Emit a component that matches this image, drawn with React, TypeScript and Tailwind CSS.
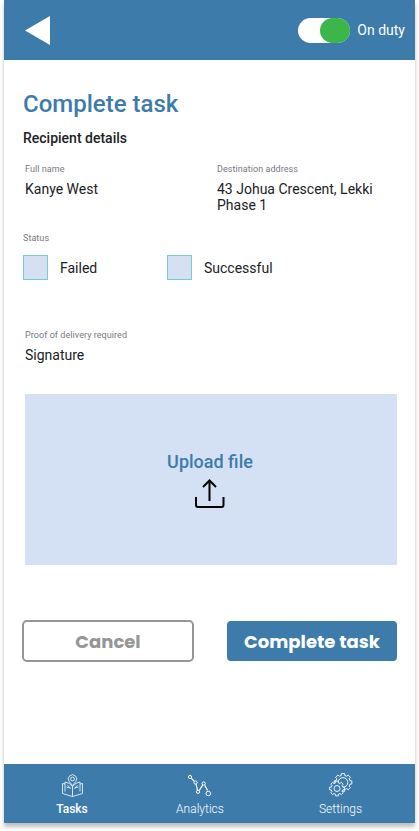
import { useState } from 'react'
import type { ReactNode } from 'react'
import clsx from 'clsx'

type Status = 'failed' | 'successful'
type TabKey = 'tasks' | 'analytics' | 'settings'

const STATUSES: Array<{ key: Status; label: string }> = [
  { key: 'failed', label: 'Failed' },
  { key: 'successful', label: 'Successful' },
]

const TABS: Array<{ key: TabKey; label: string; icon: ReactNode; className: string }> = [
  { key: 'tasks', label: 'Tasks', icon: <TasksIcon />, className: 'w-[136px]' },
  { key: 'analytics', label: 'Analytics', icon: <AnalyticsIcon />, className: 'w-[120px]' },
  { key: 'settings', label: 'Settings', icon: <SettingsIcon />, className: 'w-[161px]' },
]

export default function App() {
  const [onDuty, setOnDuty] = useState(true)
  const [status, setStatus] = useState<Status | null>(null)
  const [activeTab, setActiveTab] = useState<TabKey>('tasks')

  return (
    <div className="h-[831px] w-[419px] overflow-hidden bg-white px-1 font-[Roboto,sans-serif]">
      <div className="flex h-[823px] w-[411px] flex-col bg-white shadow-[0_4px_4px_rgba(0,0,0,0.25)]">
        <header className="flex h-[60px] shrink-0 items-center justify-between bg-[#3d7bab] pr-[10px] pl-[21px]">
          <button type="button" aria-label="Back">
            <svg width="25" height="29" viewBox="0 0 25 29" fill="white">
              <path d="M0 14.5 25 0v29Z" />
            </svg>
          </button>
          <div className="flex items-center gap-[7px]">
            <button
              type="button"
              role="switch"
              aria-checked={onDuty}
              aria-label="On duty"
              onClick={() => setOnDuty(!onDuty)}
              className={clsx('flex h-[25px] w-[52px] rounded-full bg-white', onDuty && 'justify-end')}
            >
              <span className={clsx('h-[25px] w-[30px] rounded-full', onDuty ? 'bg-[#3cb54a]' : 'bg-gray-400')} />
            </button>
            <span className="text-sm leading-4 text-white">On duty</span>
          </div>
        </header>

        <main className="flex-1 pt-[30px] pr-[18px] pl-[19px]">
          <h1 className="text-2xl leading-7 font-medium text-[#3d7bab]">Complete task</h1>
          <h2 className="mt-3 text-sm leading-4 font-medium text-[#202124]">Recipient details</h2>

          <div className="mt-[17px] flex pl-0.5">
            <Field label="Full name" className="w-48">
              Kanye West
            </Field>
            <Field label="Destination address" className="w-[170px]">
              43 Johua Crescent, Lekki Phase 1
            </Field>
          </div>

          <p className="mt-[19px] text-[9px] leading-3 tracking-[0.06px] text-[#77787f]">Status</p>
          <div className="mt-[11px] flex">
            {STATUSES.map(item => (
              <button
                key={item.key}
                type="button"
                role="checkbox"
                aria-checked={status === item.key}
                onClick={() => setStatus(item.key)}
                className="flex w-36 items-center gap-3 text-sm text-[#202124]"
              >
                <span
                  className={clsx(
                    'size-[25px] border border-[#7accc8]',
                    status === item.key ? 'bg-[#3d7bab]' : 'bg-[#d4e0f3]'
                  )}
                />
                {item.label}
              </button>
            ))}
          </div>

          <Field label="Proof of delivery required" className="mt-[49px] pl-0.5">
            Signature
          </Field>

          <button
            type="button"
            className="mt-[31px] ml-0.5 flex h-[171px] w-[372px] flex-col items-center bg-[#d4e0f3] pt-[57px] pr-0.5 text-lg leading-[22px] font-medium text-[#3d7bab]"
          >
            <span>Upload file</span>
            <UploadIcon />
          </button>

          <div className="mt-[55px] -ml-px flex items-center justify-between font-[Poppins,Inter,sans-serif] text-lg font-bold">
            <button
              type="button"
              className="h-[42px] w-[172px] rounded-[5px] border-2 border-[#969696] pt-0.5 text-[#969696]"
            >
              Cancel
            </button>
            <button type="button" className="h-10 w-[170px] rounded bg-[#3d7bab] pt-0.5 text-white">
              Complete task
            </button>
          </div>
        </main>

        <nav className="flex h-[59px] shrink-0 bg-[#3d7bab] text-xs text-white">
          {TABS.map(tab => (
            <button
              key={tab.key}
              type="button"
              onClick={() => setActiveTab(tab.key)}
              className={clsx(
                'flex shrink-0 flex-col items-center pt-[9px] leading-4',
                tab.className,
                activeTab === tab.key ? 'font-medium' : 'font-light'
              )}
            >
              {tab.icon}
              <span className="mt-1">{tab.label}</span>
            </button>
          ))}
        </nav>
      </div>
    </div>
  )
}

interface FieldProps {
  label: string
  className?: string
  children: ReactNode
}

function Field({ label, className, children }: FieldProps) {
  return (
    <div className={className}>
      <p className="text-[9px] leading-3 tracking-[0.06px] text-[#77787f]">{label}</p>
      <p className="mt-1.5 text-sm leading-4 text-[#202124]">{children}</p>
    </div>
  )
}

// ─── Icons ────────────────────────────────────────────────────────────────────

function UploadIcon() {
  return (
    <svg className="mt-1.5" width="30" height="30" viewBox="0 0 30 30" fill="none" stroke="black" strokeWidth="2">
      <path d="M14.5 22V2M8 8l6.5-6.500L21 8" />
      <path d="M1 18v8q0 2 2 2h23.500q2 0 2-2v-8" />
    </svg>
  )
}

function TasksIcon() {
  return (
    <svg width="24" height="24" viewBox="0 0 24 24" fill="none" stroke="white" strokeWidth="0.8">
      <path d="M5 11 2.500 10.500v10l10 3 10-3v-10L20 11" />
      <path d="M12.500 13.500v10" />
      <path d="M5 18.500V9q4.500.5 7.500 4.500Q15.500 9.500 20 9v9.500" />
      <path d="m6.500 14 4 1.200-3-3M18.500 14l-4 1.200 3-3" />
      <path d="m12.500 12.500-3.200-3.800a4.200 4.200 0 1 1 6.400 0Z" />
      <circle cx="12.500" cy="6" r="1.900" />
    </svg>
  )
}

function AnalyticsIcon() {
  return (
    <svg width="24" height="24" viewBox="0 0 24 24" fill="none" stroke="white">
      <path d="m3.200 5.100 2.900 2.900M8 11.100l1.500 6M11.200 17.500l3.700-5.600M16.800 12.200l2.700 5.200" strokeWidth="1.200" />
      <circle cx="2" cy="4" r="1.600" />
      <circle cx="7.500" cy="9.500" r="1.600" />
      <circle cx="10" cy="18.800" r="1.600" />
      <circle cx="15.700" cy="10.500" r="1.600" />
      <circle cx="20.300" cy="20.500" r="2.300" />
    </svg>
  )
}

function gearPath(cx: number, cy: number, inner: number, outer: number) {
  const points: string[] = []
  for (let tooth = 0; tooth < 8; tooth++) {
    const steps: Array<[number, number]> = [[-0.24, inner], [-0.18, outer], [0.18, outer], [0.24, inner]]
    for (const [offset, radius] of steps) {
      const angle = (tooth * Math.PI) / 4 + offset
      points.push(`${(cx + radius * Math.cos(angle)).toFixed(2)} ${(cy + radius * Math.sin(angle)).toFixed(2)}`)
    }
  }
  return `M${points.join('L')}Z`
}

function SettingsIcon() {
  return (
    <svg width="24" height="24" viewBox="0 0 24 24" fill="#3d7bab" stroke="white" strokeWidth="0.9" strokeLinejoin="round">
      <path d={gearPath(14, 9.4, 7.2, 9)} />
      <circle cx="14" cy="9.400" r="4.800" />
      <path d={gearPath(8, 15.5, 5.900, 7.500)} />
      <circle cx="8" cy="15.500" r="3" />
    </svg>
  )
}
